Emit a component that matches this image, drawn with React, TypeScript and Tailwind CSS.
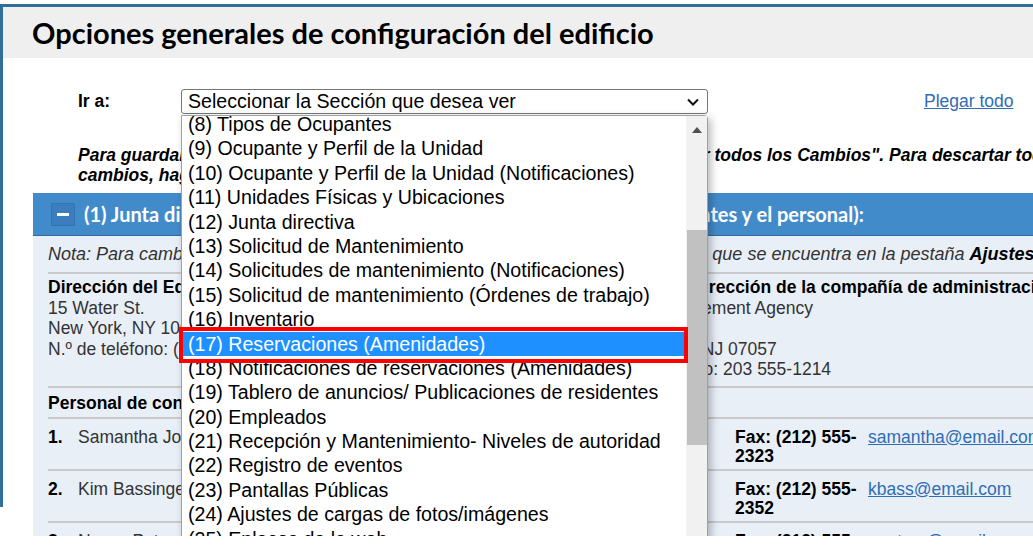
import React from "react";

// ── data ──────────────────────────────────────────────────────────────────────

const sections = [
  "(8) Tipos de Ocupantes",
  "(9) Ocupante y Perfil de la Unidad",
  "(10) Ocupante y Perfil de la Unidad (Notificaciones)",
  "(11) Unidades Físicas y Ubicaciones",
  "(12) Junta directiva",
  "(13) Solicitud de Mantenimiento",
  "(14) Solicitudes de mantenimiento (Notificaciones)",
  "(15) Solicitud de mantenimiento (Órdenes de trabajo)",
  "(16) Inventario",
  "(17) Reservaciones (Amenidades)",
  "(18) Notificaciones de reservaciones (Amenidades)",
  "(19) Tablero de anuncios/ Publicaciones de residentes",
  "(20) Empleados",
  "(21) Recepción y Mantenimiento- Niveles de autoridad",
  "(22) Registro de eventos",
  "(23) Pantallas Públicas",
  "(24) Ajustes de cargas de fotos/imágenes",
  "(25) Enlaces de la web",
];

const SELECTED = "(17) Reservaciones (Amenidades)";

const staff = [
  { n: "1.", name: "Samantha Jones", fax: "2323", email: "samantha@email.com" },
  { n: "2.", name: "Kim Bassinger", fax: "2352", email: "kbass@email.com" },
  { n: "3.", name: "Nancy Peters", fax: "2325", email: "npeters@email.com" },
];

// ── dropdown (open select popup) ──────────────────────────────────────────────

function SectionList() {
  return (
    <div className="absolute left-0 top-[26px] z-10 w-[527px] h-[430px] bg-white border border-[#a0a0a0] rounded-tr-[4px] shadow-[3px_3px_8px_rgba(0,0,0,0.28)]">
      <div className="flex h-full">
        <div className="flex-1 overflow-hidden">
          <div className="-mt-[4px]">
            {sections.map((s) => (
              <div
                key={s}
                className={
                  s === SELECTED
                    ? "h-[24.4px] leading-[24.4px] pl-[6px] text-[19.6px] whitespace-nowrap bg-[#1e90ff] text-white"
                    : "h-[24.4px] leading-[24.4px] pl-[6px] text-[19.6px] whitespace-nowrap text-black"
                }
              >
                {s}
              </div>
            ))}
          </div>
        </div>
        {/* scrollbar */}
        <div className="w-[21px] bg-[#f1f1f1] flex flex-col">
          <div className="h-[28px] flex items-center justify-center">
            <svg width="10" height="6" viewBox="0 0 10 6">
              <path d="M0 6 L5 0 L10 6 Z" fill="#505050" />
            </svg>
          </div>
          <div className="mt-[86px] h-[215px] ml-[1px] bg-[#c1c1c1]" />
        </div>
      </div>
      {/* red highlight annotation */}
      <div className="absolute left-[-3px] top-[211px] w-[509px] h-[36px] border-[4px] border-[#ff0000]" />
    </div>
  );
}

// ── page ──────────────────────────────────────────────────────────────────────

export default function App() {
  return (
    <div className="w-[1033px] h-[552px] bg-white overflow-hidden font-['Liberation_Sans',Arial,sans-serif] text-[#333]">
      <div className="h-[536px] overflow-hidden pt-[4px]">
        <div className="h-[503px] w-[1100px] border-l-[3px] border-t-[3px] border-[#2f6f99]">
          {/* title bar */}
          <div className="h-[51px] bg-[#efefef] flex items-center pl-[29px]">
            <h1 className="font-['Lato',sans-serif] font-bold text-[29px] leading-none text-black">
              Opciones generales de configuración del edificio
            </h1>
          </div>

          {/* go-to row */}
          <div className="mt-[31px] h-[25px] flex items-center pl-[75px]">
            <span className="w-[103px] font-bold text-[17.5px] text-black">Ir a:</span>
            <div className="relative w-[527px] h-[25px]">
              <div className="h-full border border-[#767676] rounded-[3px] bg-white flex items-center justify-between pl-[6px] pr-[8px] text-[19.6px] text-black">
                <span>Seleccionar la Sección que desea ver</span>
                <svg width="12" height="8" viewBox="0 0 12 8">
                  <path d="M1 1.5 L6 6.5 L11 1.5" fill="none" stroke="#111" strokeWidth="2" />
                </svg>
              </div>
              <SectionList />
            </div>
            <a className="ml-[216px] text-[17.5px] text-[#2f6db5] underline">Plegar todo</a>
          </div>

          {/* save note */}
          <p className="mt-[31px] pl-[75px] whitespace-nowrap font-bold italic text-[17.5px] leading-[20px] text-black">
            Para guardar todos los cambios realizados, haga clic con el botón "Guardar todos los Cambios". Para descartar todos los
            <br />
            cambios, haga clic en "Cancelar".
          </p>

          {/* section (1) */}
          <div className="mt-[8px] ml-[30px]">
            <div className="h-[43px] bg-[#428bca] border-b border-[#2f6aa0] flex items-center pl-[18px]">
              <div className="w-[24px] h-[23px] bg-[#3a7ec0] border border-[#3473ae] flex items-center justify-center">
                <div className="w-[12px] h-[3px] bg-white" />
              </div>
              <span className="ml-[9px] font-['Lato',sans-serif] font-bold text-[20px] text-white whitespace-nowrap">
                (1) Junta directiva, información de contacto del edificio y de los residentes y el personal):
              </span>
            </div>

            <div className="bg-[#e9eff7] pl-[15px] pb-[20px]">
              <p className="pt-[8px] italic text-[18px] leading-[20px] whitespace-nowrap">
                Nota: Para cambiar la dirección o número de teléfono del edificio, use el formulario que se encuentra en la pestaña{" "}
                <b className="text-black">Ajustes de la cuenta</b>.
              </p>
              <div className="mt-[8px] h-[2px] bg-[#cacaca]" />

              {/* addresses */}
              <div className="pt-[3px] pb-[6px] grid grid-cols-[550px_auto] text-[17.5px] leading-[20.5px] whitespace-nowrap">
                <div>
                  <div className="font-bold text-black">Dirección del Edificio:</div>
                  <div>15 Water St.</div>
                  <div>New York, NY 10001</div>
                  <div>N.º de teléfono: (212) 555-1200</div>
                </div>
                <div>
                  <div className="font-bold text-black">Nombres y dirección de la compañía de administración:</div>
                  <div>Prime Management Agency</div>
                  <div>100 Main St.</div>
                  <div>Woodbridge, NJ 07057</div>
                  <div>N.º de teléfono: 203 555-1214</div>
                </div>
              </div>
              <div className="h-[2px] bg-[#cacaca]" />

              <div className="pt-[5px] pb-[4px] font-bold text-[17.5px] leading-[20px] text-black">
                Personal de contacto:
              </div>

              {staff.map((p) => (
                <div key={p.n}>
                  <div className="h-[2px] bg-[#cacaca]" />
                  <div className="pt-[9px] pb-[2px] grid grid-cols-[30px_657px_133px_auto] text-[17.5px] leading-[19.5px] whitespace-nowrap">
                    <span className="font-bold text-black">{p.n}</span>
                    <span>{p.name}</span>
                    <span className="font-bold text-black">
                      Fax: (212) 555-
                      <br />
                      {p.fax}
                    </span>
                    <a className="text-[#2f6db5] underline">{p.email}</a>
                  </div>
                </div>
              ))}
            </div>
          </div>
        </div>
      </div>
    </div>
  );
}
